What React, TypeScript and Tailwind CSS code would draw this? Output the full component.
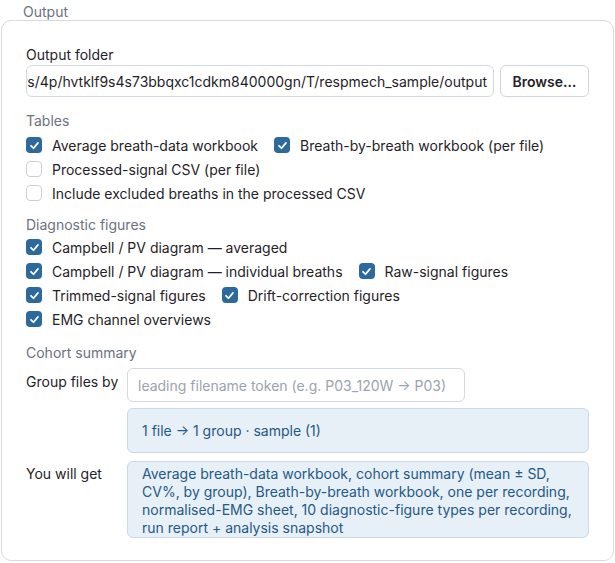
import type { ReactNode } from 'react';

function Check({ on, label }: { on: boolean; label: string }) {
  return (
    <label className="flex items-center gap-[10px] h-5 whitespace-nowrap">
      {on ? (
        <span className="w-4 h-4 rounded-[4px] bg-[#2d6a9b] flex items-center justify-center">
          <svg width="11" height="11" viewBox="0 0 12 12" fill="none">
            <path d="M2.2 6.3 4.9 9 9.8 3.2" stroke="#fff" strokeWidth="1.9" strokeLinecap="round" strokeLinejoin="round" />
          </svg>
        </span>
      ) : (
        <span className="w-4 h-4 rounded-[4px] bg-white border border-[#c8ced6]" />
      )}
      <span>{label}</span>
    </label>
  );
}

function Section({ title, tight, children }: { title: string; tight?: boolean; children: ReactNode }) {
  return (
    <div className="flex flex-col">
      <div className="h-5 leading-5 text-[#6b7280]">{title}</div>
      <div className={`${tight ? 'mt-[2px]' : 'mt-1'} flex flex-wrap gap-x-[16px] gap-y-1`}>{children}</div>
    </div>
  );
}

export default function App() {
  return (
    <div className="w-[615px] h-[563px] bg-white pt-[3px] px-[1px] text-[14px] text-[#1f2329] font-['Inter',sans-serif]">
      <div className="pl-[22px] h-[17px] leading-[17px] text-[14px] text-[#6b7280]">Output</div>
      <div className="h-[541px] border border-[#d5dbe2] rounded-[10px] px-[24px] pt-[24px] flex flex-col">
        {/* Output folder */}
        <div className="h-5 leading-5">Output folder</div>
        <div className="flex gap-[6px]">
          <div className="flex-1 h-8 border border-[#d3d9e0] rounded-[6px] flex items-center justify-end overflow-hidden pr-[6px] whitespace-nowrap">
            <span>/var/folders/4p/hvtklf9s4s73bbqxc1cdkm840000gn/T/respmech_sample/output</span>
          </div>
          <button className="w-[89px] h-8 border border-[#cfd5dc] rounded-[6px] bg-white font-semibold text-[#1f2329]">
            Browse…
          </button>
        </div>

        <div className="mt-[14px] flex flex-col gap-[12px]">
          <Section title="Tables">
            <Check on label="Average breath-data workbook" />
            <Check on label="Breath-by-breath workbook (per file)" />
            <Check on={false} label="Processed-signal CSV (per file)" />
            <Check on={false} label="Include excluded breaths in the processed CSV" />
          </Section>
          <Section title="Diagnostic figures" tight>
            <Check on label="Campbell / PV diagram — averaged" />
            <Check on label="Campbell / PV diagram — individual breaths" />
            <Check on label="Raw-signal figures" />
            <Check on label="Trimmed-signal figures" />
            <Check on label="Drift-correction figures" />
            <Check on label="EMG channel overviews" />
          </Section>
        </div>

        {/* Cohort summary */}
        <div className="mt-[14px] h-5 leading-5 text-[#6b7280]">Cohort summary</div>
        <div className="mt-[5px] flex">
          <div className="w-[101px] pt-[4px] leading-5">Group files by</div>
          <div className="flex-1 flex flex-col gap-[6px]">
            <div className="w-[338px] h-[34px] border border-[#d3d9e0] rounded-[6px] flex items-center px-[10px] text-[#9ca3af]">
              leading filename token (e.g. P03_120W → P03)
            </div>
            <div className="h-[45px] border border-[#c8d9ea] bg-[#e7eff7] rounded-[6px] flex items-center px-[14px] text-[#245a86]">
              1 file → 1 group · sample (1)
            </div>
          </div>
        </div>
        <div className="mt-[8px] flex">
          <div className="w-[101px] pt-[3px] leading-5">You will get</div>
          <div className="flex-1 border border-[#c8d9ea] bg-[#e7eff7] rounded-[6px] px-[14px] pt-[3px] pb-0 leading-[18px] text-[14px] text-[#245a86]">
            Average breath-data workbook, cohort summary (mean ± SD, CV%, by group), Breath-by-breath workbook, one per recording, normalised-EMG sheet, 10 diagnostic-figure types per recording, run report + analysis snapshot
          </div>
        </div>
      </div>
    </div>
  );
}
